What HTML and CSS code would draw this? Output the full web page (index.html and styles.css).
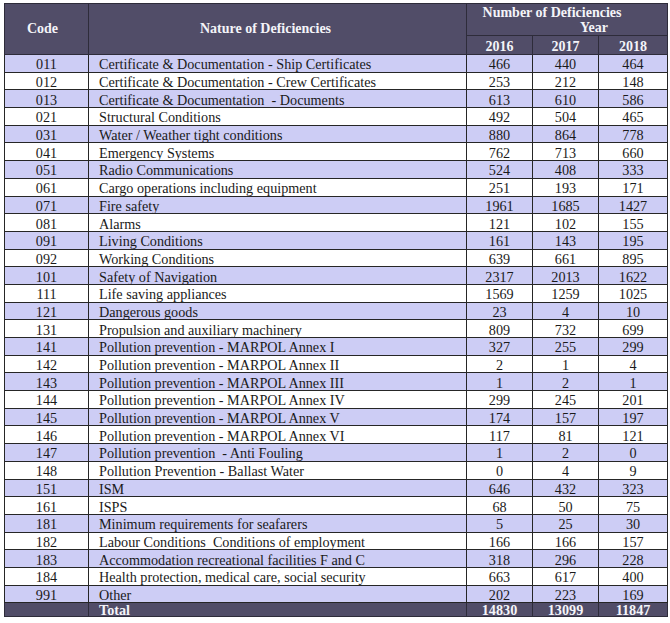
FILE: index.html
```html
<!DOCTYPE html>
<html>
<head>
<meta charset="utf-8">
<link rel="stylesheet" href="styles.css">
</head>
<body>
<table class="def">
<colgroup>
<col class="c-code"><col class="c-nat"><col class="c-y"><col class="c-y"><col class="c-y3">
</colgroup>
<thead>
<tr class="h1"><th rowspan="2" class="code-h">Code</th><th rowspan="2" class="nat-h">Nature of Deficiencies</th><th colspan="3" class="num-h"><span class="l1">Number of Deficiencies</span><span class="l2">Year</span></th></tr>
<tr class="h2"><th>2016</th><th>2017</th><th>2018</th></tr>
</thead>
<tbody>
<tr class="a"><td>011</td><td class="n">Certificate &amp; Documentation - Ship Certificates</td><td>466</td><td>440</td><td>464</td></tr>
<tr><td>012</td><td class="n">Certificate &amp; Documentation - Crew Certificates</td><td>253</td><td>212</td><td>148</td></tr>
<tr class="a"><td>013</td><td class="n">Certificate &amp; Documentation &nbsp;- Documents</td><td>613</td><td>610</td><td>586</td></tr>
<tr><td>021</td><td class="n">Structural Conditions</td><td>492</td><td>504</td><td>465</td></tr>
<tr class="a"><td>031</td><td class="n">Water / Weather tight conditions</td><td>880</td><td>864</td><td>778</td></tr>
<tr><td>041</td><td class="n">Emergency Systems</td><td>762</td><td>713</td><td>660</td></tr>
<tr class="a"><td>051</td><td class="n">Radio Communications</td><td>524</td><td>408</td><td>333</td></tr>
<tr><td>061</td><td class="n">Cargo operations including equipment</td><td>251</td><td>193</td><td>171</td></tr>
<tr class="a"><td>071</td><td class="n">Fire safety</td><td>1961</td><td>1685</td><td>1427</td></tr>
<tr><td>081</td><td class="n">Alarms</td><td>121</td><td>102</td><td>155</td></tr>
<tr class="a"><td>091</td><td class="n">Living Conditions</td><td>161</td><td>143</td><td>195</td></tr>
<tr><td>092</td><td class="n">Working Conditions</td><td>639</td><td>661</td><td>895</td></tr>
<tr class="a"><td>101</td><td class="n">Safety of Navigation</td><td>2317</td><td>2013</td><td>1622</td></tr>
<tr><td>111</td><td class="n">Life saving appliances</td><td>1569</td><td>1259</td><td>1025</td></tr>
<tr class="a"><td>121</td><td class="n">Dangerous goods</td><td>23</td><td>4</td><td>10</td></tr>
<tr><td>131</td><td class="n">Propulsion and auxiliary machinery</td><td>809</td><td>732</td><td>699</td></tr>
<tr class="a"><td>141</td><td class="n">Pollution prevention - MARPOL Annex I</td><td>327</td><td>255</td><td>299</td></tr>
<tr><td>142</td><td class="n">Pollution prevention - MARPOL Annex II</td><td>2</td><td>1</td><td>4</td></tr>
<tr class="a"><td>143</td><td class="n">Pollution prevention - MARPOL Annex III</td><td>1</td><td>2</td><td>1</td></tr>
<tr><td>144</td><td class="n">Pollution prevention - MARPOL Annex IV</td><td>299</td><td>245</td><td>201</td></tr>
<tr class="a"><td>145</td><td class="n">Pollution prevention - MARPOL Annex V</td><td>174</td><td>157</td><td>197</td></tr>
<tr><td>146</td><td class="n">Pollution prevention - MARPOL Annex VI</td><td>117</td><td>81</td><td>121</td></tr>
<tr class="a"><td>147</td><td class="n">Pollution prevention &nbsp;- Anti Fouling</td><td>1</td><td>2</td><td>0</td></tr>
<tr><td>148</td><td class="n">Pollution Prevention - Ballast Water</td><td>0</td><td>4</td><td>9</td></tr>
<tr class="a"><td>151</td><td class="n">ISM</td><td>646</td><td>432</td><td>323</td></tr>
<tr><td>161</td><td class="n">ISPS</td><td>68</td><td>50</td><td>75</td></tr>
<tr class="a"><td>181</td><td class="n">Minimum requirements for seafarers</td><td>5</td><td>25</td><td>30</td></tr>
<tr><td>182</td><td class="n">Labour Conditions &nbsp;Conditions of employment</td><td>166</td><td>166</td><td>157</td></tr>
<tr class="a"><td>183</td><td class="n">Accommodation recreational facilities F and C</td><td>318</td><td>296</td><td>228</td></tr>
<tr><td>184</td><td class="n">Health protection, medical care, social security</td><td>663</td><td>617</td><td>400</td></tr>
<tr class="a"><td>991</td><td class="n">Other</td><td>202</td><td>223</td><td>169</td></tr>
<tr class="total"><td></td><td class="n">Total</td><td>14830</td><td>13099</td><td>11847</td></tr>
</tbody>
</table>
</body>
</html>
```
FILE: styles.css
```css
html, body {
  margin: 0;
  background: #ffffff;
}
body {
  padding: 3px 0 0 4px;
  font-family: "Liberation Serif", "Times New Roman", serif;
  color: #1a1a1a;
}
.def {
  border-collapse: collapse;
  table-layout: fixed;
  width: 663px;
  border: 1px solid #2a2a2a;
}
.c-code { width: 84px; }
.c-nat { width: 378px; }
.c-y { width: 66px; }
.c-y3 { width: 69px; }
.def th {
  background: #514d68;
  color: #f4f4f8;
  font-weight: bold;
  font-size: 14px;
  border: 1px solid #2e2c3a;
  padding: 0;
  text-align: center;
}
.def th.code-h { padding-right: 8px; }
.def th.nat-h { padding-right: 24px; }
.h1 th { height: 31px; }
.h1 .num-h { line-height: 15px; padding-top: 0; vertical-align: middle; }
.num-h .l1 { display: block; padding-right: 30px; }
.num-h .l2 { display: block; padding-left: 54px; }
.h2 th { height: 16px; padding-top: 2px; line-height: 15px; }
.def td {
  border: 1px solid #262626;
  font-size: 14.2px;
  height: 14.7px;
  line-height: 14px;
  padding: 2px 0 0 0;
  text-align: center;
  white-space: nowrap;
  overflow: hidden;
}
.def td.n {
  text-align: left;
  padding-left: 10px;
}
.def tr.a td { background: #cdcdf5; }
.def tr.total td {
  background: #514d68;
  color: #f4f4f8;
  font-weight: bold;
  border-color: #2e2c3a;
  height: 12px;
  line-height: 12px;
  padding-top: 1px;
}
```
